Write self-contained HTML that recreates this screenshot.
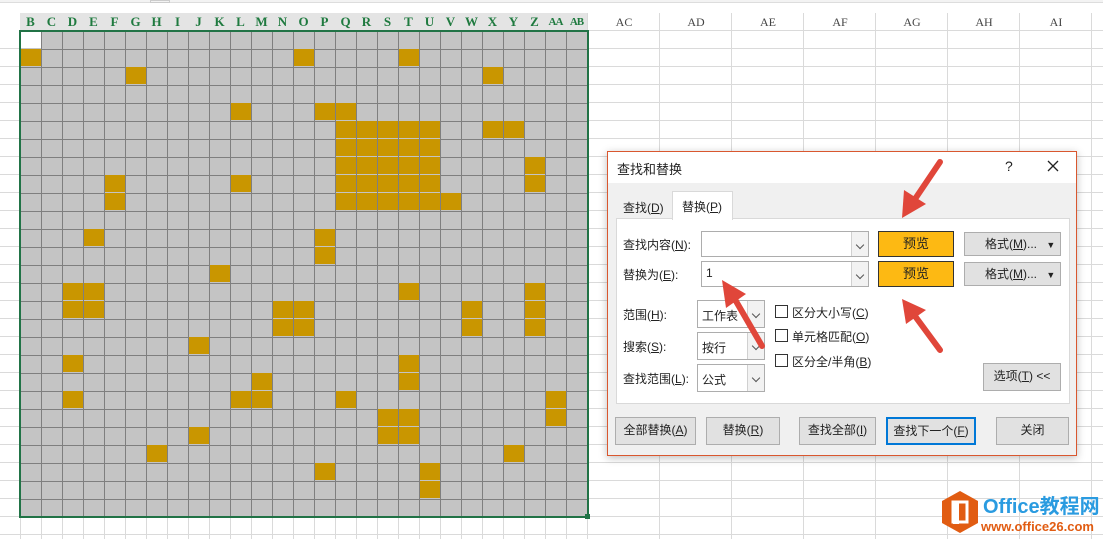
<!DOCTYPE html>
<html><head><meta charset="utf-8">
<style>
*{margin:0;padding:0;box-sizing:border-box}
body{width:1103px;height:539px;overflow:hidden;background:#fff;position:relative;font-family:"Liberation Sans","Noto Sans CJK SC",sans-serif;font-size:12px;color:#222}
.a{position:absolute}
#bg{left:0;top:31px;width:1103px;height:508px;background-image:repeating-linear-gradient(to bottom,transparent 0 17px,#dadada 17px 18px)}
#vl{left:20px;top:13px;width:1083px;height:526px;background-image:repeating-linear-gradient(to right,#dadada 0 1px,transparent 1px 21px)}
#vr{left:587px;top:13px;width:516px;height:526px;background:#fff;background-image:repeating-linear-gradient(to right,#dadada 0 1px,transparent 1px 72px),repeating-linear-gradient(to bottom,transparent 0 17px,#dadada 17px 18px);background-position:0 0,0 0}
#hdr{left:20px;top:13px;width:567px;height:18px;background:#e4e4e4}
.h{position:absolute;top:13px;height:18px;line-height:18px;text-align:center;font-family:"Liberation Serif",serif;font-weight:bold;color:#1f7a3f;font-size:13px}
.hr{position:absolute;top:13px;height:18px;line-height:18px;text-align:center;font-family:"Liberation Serif",serif;color:#444;font-size:12px;width:72px}
#grid{left:20px;top:30px;width:568px;height:487px;background:#c4c4c4;background-image:repeating-linear-gradient(to right,#7f7f7f 0 1px,transparent 1px 21px),repeating-linear-gradient(to bottom,#7f7f7f 0 1px,transparent 1px 18px);background-position:0 1px,0 1px}
.o{position:absolute;width:20px;height:17px;background:#c99600}
#sel{left:19px;top:30px;width:570px;height:488px;border:2px solid #217346}
#dlg{left:607px;top:151px;width:470px;height:305px;background:#f0f0f0;border:1px solid #d9572f;box-shadow:0 2px 8px rgba(0,0,0,.25)}
#dlg .t{background:#fff;position:absolute;left:0;top:0;width:468px;height:31px}
.btn{position:absolute;background:#e1e1e1;border:1px solid #adadad;text-align:center;font-size:12px;line-height:25px}
.cb{position:absolute;background:#fff;border:1px solid #adadad}
.dd{position:absolute;right:0;top:0;bottom:0;width:17px;border-left:1px solid #d0d0d0;background:#f2f2f2}
.dd:after{content:"";position:absolute;left:5px;top:40%;width:5px;height:5px;border-right:1px solid #555;border-bottom:1px solid #555;transform:rotate(45deg)}
.pv{position:absolute;background:#fdb913;border:1px solid #333;text-align:center;font-size:13px;line-height:24px}
.chk{position:absolute;width:13px;height:13px;border:1px solid #333;background:#fff}
.lb{position:absolute;font-size:12px;white-space:nowrap}
</style></head><body>
<div class="a" style="left:0;top:0;width:1103px;height:3px;background:#f3f3f3;border-bottom:1px solid #ddd"></div>
<div class="a" style="left:150px;top:0;width:20px;height:3px;border:1px solid #ccc"></div>
<div id="bg" class="a"></div><div id="vl" class="a"></div>
<div id="vr" class="a"></div>
<div id="hdr" class="a"></div>
<div id="grid" class="a"></div>
<div class="a" style="left:21px;top:31px;width:20px;height:17px;background:#fff"></div>
<div id="cells"></div>
<div id="sel" class="a"></div>
<div class="a" style="left:585px;top:514px;width:5px;height:5px;background:#217346"></div>
<div id="hd"></div>

<div id="dlg" class="a">
<div class="t"></div>
<div class="lb" style="left:9px;top:7px;font-size:13px">查找和替换</div>
<div class="lb" style="left:397px;top:6px;font-size:14px">?</div>
<svg class="a" style="left:439px;top:8px" width="12" height="12"><path d="M1 1L11 11M11 1L1 11" stroke="#222" stroke-width="1.3"/></svg>
<div class="a" style="left:8px;top:66px;width:454px;height:186px;background:#fff;border:1px solid #d9d9d9"></div>
<div class="lb" style="left:15px;top:47px">查找(<u>D</u>)</div>
<div class="a" style="left:64px;top:39px;width:61px;height:29px;background:#fff;border:1px solid #d9d9d9;border-bottom:none"></div>
<div class="lb" style="left:74px;top:46px">替换(<u>P</u>)</div>
<div class="lb" style="left:15px;top:84px">查找内容(<u>N</u>):</div>
<div class="lb" style="left:15px;top:114px">替换为(<u>E</u>):</div>
<div class="cb" style="left:93px;top:79px;width:168px;height:26px"><div class="dd"></div></div>
<div class="cb" style="left:93px;top:109px;width:168px;height:26px"><span style="position:absolute;left:4px;top:4px">1</span><div class="dd"></div></div>
<div class="pv" style="left:270px;top:79px;width:76px;height:26px">预览</div>
<div class="pv" style="left:270px;top:109px;width:76px;height:26px">预览</div>
<div class="btn" style="left:356px;top:80px;width:97px;height:24px;line-height:22px;text-align:left;padding-left:20px">格式(<u>M</u>)... <span style="font-size:9px;margin-left:6px">▼</span></div>
<div class="btn" style="left:356px;top:110px;width:97px;height:24px;line-height:22px;text-align:left;padding-left:20px">格式(<u>M</u>)... <span style="font-size:9px;margin-left:6px">▼</span></div>
<div class="lb" style="left:15px;top:154px">范围(<u>H</u>):</div>
<div class="lb" style="left:15px;top:186px">搜索(<u>S</u>):</div>
<div class="lb" style="left:15px;top:218px">查找范围(<u>L</u>):</div>
<div class="cb" style="left:89px;top:148px;width:68px;height:28px"><span style="position:absolute;left:4px;top:6px">工作表</span><div class="dd"></div></div>
<div class="cb" style="left:89px;top:180px;width:68px;height:28px"><span style="position:absolute;left:4px;top:6px">按行</span><div class="dd"></div></div>
<div class="cb" style="left:89px;top:212px;width:68px;height:28px"><span style="position:absolute;left:4px;top:6px">公式</span><div class="dd"></div></div>
<div class="chk" style="left:167px;top:153px"></div><div class="lb" style="left:184px;top:152px">区分大小写(<u>C</u>)</div>
<div class="chk" style="left:167px;top:177px"></div><div class="lb" style="left:184px;top:176px">单元格匹配(<u>O</u>)</div>
<div class="chk" style="left:167px;top:202px"></div><div class="lb" style="left:184px;top:201px">区分全/半角(<u>B</u>)</div>
<div class="btn" style="left:375px;top:211px;width:78px;height:28px">选项(<u>T</u>) &lt;&lt;</div>
<div class="btn" style="left:7px;top:265px;width:81px;height:28px">全部替换(<u>A</u>)</div>
<div class="btn" style="left:98px;top:265px;width:74px;height:28px">替换(<u>R</u>)</div>
<div class="btn" style="left:191px;top:265px;width:77px;height:28px">查找全部(<u>I</u>)</div>
<div class="btn" style="left:278px;top:265px;width:90px;height:28px;border:2px solid #0078d7;line-height:24px">查找下一个(<u>F</u>)</div>
<div class="btn" style="left:388px;top:265px;width:73px;height:28px">关闭</div>
</div>

<svg class="a" style="left:0;top:0" width="1103" height="539">
<g fill="#e0463a" stroke="#e0463a" stroke-width="6" stroke-linecap="round">
<line x1="940" y1="162" x2="913" y2="202"/>
<line x1="762" y1="346" x2="733" y2="296"/>
<line x1="940" y1="350" x2="912" y2="312"/>
</g>
<g fill="#e0463a">
<polygon points="902,218 904,190 926,204"/>
<polygon points="722,280 746,294 726,308"/>
<polygon points="902,299 926,310 906,324"/>
</g>
<g transform="translate(940,491)">
<polygon points="20,0 38,10 38,32 20,42 2,32 2,10" fill="#e15c12"/>
<rect x="13" y="11" width="14" height="20" fill="none" stroke="#fff" stroke-width="3"/>
<rect x="13" y="11" width="6" height="22" fill="#fff"/>
</g>
<text x="983" y="513" font-family="Liberation Sans, Noto Sans CJK SC, sans-serif" font-size="20" font-weight="bold" fill="#2a9be0">Office教程网</text>
<text x="981" y="531" font-family="Liberation Sans, sans-serif" font-size="13" font-weight="bold" fill="#e15c12">www.office26.com</text>
</svg>
<script>
var cols=["B","C","D","E","F","G","H","I","J","K","L","M","N","O","P","Q","R","S","T","U","V","W","X","Y","Z","AA","AB"];
var h="";cols.forEach(function(c,i){h+='<div class="h" style="left:'+(20+21*i)+'px;width:21px;'+(c.length>1?'font-size:11px;letter-spacing:-1px':'')+'">'+c+'</div>';});
["AC","AD","AE","AF","AG","AH","AI"].forEach(function(c,i){h+='<div class="hr" style="left:'+(588+72*i)+'px">'+c+'</div>';});
document.getElementById("hd").innerHTML=h;
var o={1:[0,13,18],2:[5,22],4:[10,14,15],5:[15,16,17,18,19,22,23],6:[15,16,17,18,19],7:[15,16,17,18,19,24],8:[4,10,15,16,17,18,19,24],9:[4,15,16,17,18,19,20],11:[3,14],12:[14],13:[9],14:[2,3,18,24],15:[2,3,12,13,21,24],16:[12,13,21,24],17:[8],18:[2,18],19:[11,18],20:[2,10,11,15,25],21:[17,18,25],22:[8,17,18],23:[6,23],24:[14,19],25:[19]};
var s="";for(var r in o){o[r].forEach(function(c){s+='<div class="o" style="left:'+(21+21*c)+'px;top:'+(31+18*r)+'px"></div>';});}
document.getElementById("cells").innerHTML=s;
</script>
</body></html>
